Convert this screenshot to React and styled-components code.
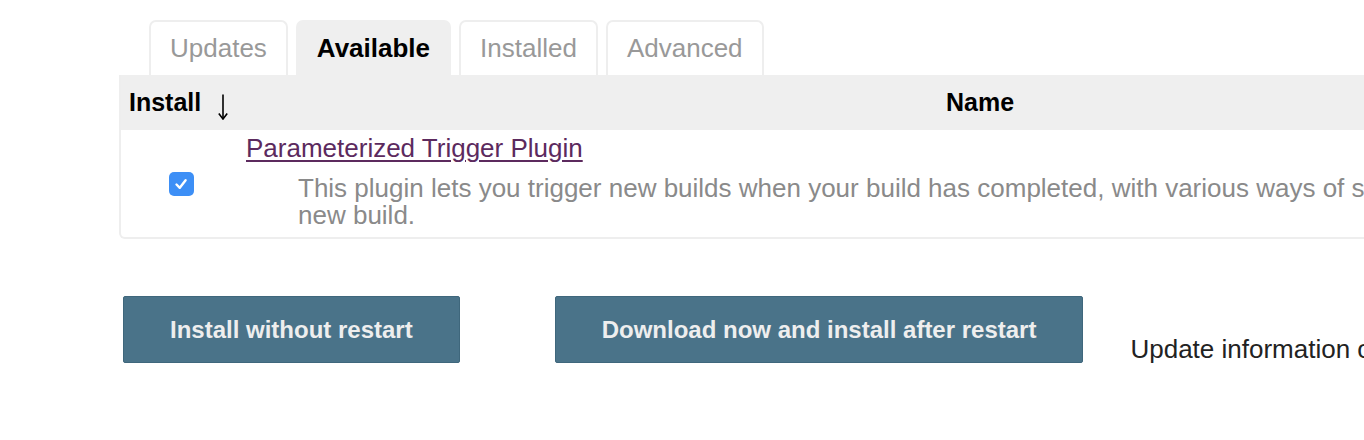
import React from "react";
import styled, { createGlobalStyle } from "styled-components";

const Global = createGlobalStyle`
  html, body { margin: 0; padding: 0; background: #fff; overflow: hidden; }
  body { font-family: "Liberation Sans", Arial, Helvetica, sans-serif; color: #333; }
`;

const Page = styled.div`
  width: 2200px;
  padding: 20px 0 0 119px;
  box-sizing: border-box;
`;

const Tabs = styled.div`
  display: flex;
  gap: 8px;
  padding-left: 30px;
`;

const Tab = styled.div`
  height: 55px;
  box-sizing: border-box;
  padding: 0 19px;
  display: flex;
  align-items: center;
  font-size: 26px;
  border: 2px solid ${(p) => (p.$active ? "#efefef" : "#eeeeee")};
  border-bottom: none;
  border-radius: 7px 7px 0 0;
  background: ${(p) => (p.$active ? "#efefef" : "#fff")};
  color: ${(p) => (p.$active ? "#000" : "#999")};
  font-weight: ${(p) => (p.$active ? 700 : 400)};
`;

const Table = styled.div`
  width: 1900px;
  border: 2px solid #eeeeee;
  border-top: none;
  border-radius: 0 0 6px 6px;
`;

const HeadRow = styled.div`
  display: grid;
  grid-template-columns: 120px 1478px 1fr;
  height: 55px;
  background: #efefef;
  align-items: center;
  font-size: 25px;
  font-weight: 700;
  color: #000;
`;

const HeadCell = styled.div`
  display: flex;
  align-items: center;
  justify-content: ${(p) => (p.$center ? "center" : "flex-start")};
  padding-left: ${(p) => p.$pad || 0}px;
`;

const SortArrow = styled.svg`
  margin-left: 17px;
  margin-top: 8px;
  flex: none;
`;

const BodyRow = styled.div`
  display: grid;
  grid-template-columns: 120px 1478px 1fr;
  align-items: center;
  padding: 4px 0 8px;
`;

const CheckCell = styled.div`
  display: flex;
  justify-content: center;
`;

const Check = styled.span`
  width: 25px;
  height: 24px;
  margin-top: 4px;
  border-radius: 5px;
  background: #3d8ff6;
  display: flex;
  align-items: center;
  justify-content: center;
`;

const NameCell = styled.div`
  padding-left: 5px;
`;

const PluginLink = styled.a`
  font-size: 26px;
  line-height: 28px;
  color: #5c2a5e;
  text-decoration: underline;
  text-underline-offset: 3px;
  text-decoration-thickness: 2px;
`;

const Desc = styled.div`
  margin-top: 13px;
  padding-left: 52px;
  padding-right: 6px;
  font-size: 26px;
  line-height: 27px;
  color: #8a8a8a;
`;

const Actions = styled.div`
  display: flex;
  align-items: flex-start;
  margin-top: 57px;
  padding-left: 4px;
`;

const Button = styled.button`
  height: 67px;
  padding: 0 ${(p) => p.$pad}px;
  border: 1px solid #3f677c;
  border-radius: 2px;
  background: #4a7389;
  color: #eeeeee;
  font-family: "Liberation Sans", Arial, sans-serif;
  font-weight: 700;
  font-size: 24px;
  margin-right: ${(p) => p.$mr}px;
`;

const Info = styled.div`
  font-size: 26px;
  color: #222;
  margin-top: 38px;
  white-space: nowrap;
`;

export default function App() {
  return (
    <>
      <Global />
      <Page>
        <Tabs>
          <Tab>Updates</Tab>
          <Tab $active>Available</Tab>
          <Tab>Installed</Tab>
          <Tab>Advanced</Tab>
        </Tabs>
        <Table>
          <HeadRow>
            <HeadCell $pad={8}>
              Install
              <SortArrow width="10" height="26" viewBox="0 0 10 26" aria-label="sorted descending">
                <path d="M5 0.5 V24.5" stroke="#000" strokeWidth="1.6" fill="none" />
                <path d="M0.8 19.5 L5 25 L9.2 19.5" stroke="#000" strokeWidth="1.6" fill="none" strokeLinejoin="miter" />
              </SortArrow>
            </HeadCell>
            <HeadCell $center>Name</HeadCell>
            <HeadCell $center>Version</HeadCell>
          </HeadRow>
          <BodyRow>
            <CheckCell>
              <Check>
                <svg width="16" height="16" viewBox="0 0 16 16">
                  <path
                    d="M3.5 8.5 L6.8 11.8 L12.6 4.2"
                    fill="none"
                    stroke="#fff"
                    strokeWidth="2.4"
                    strokeLinecap="round"
                    strokeLinejoin="round"
                  />
                </svg>
              </Check>
            </CheckCell>
            <NameCell>
              <PluginLink href="#">Parameterized Trigger Plugin</PluginLink>
              <Desc>
                This plugin lets you trigger new builds when your build has
                completed, with various ways of specifying parameters for the
                new build.
              </Desc>
            </NameCell>
            <div>2.35.2</div>
          </BodyRow>
        </Table>
        <Actions>
          <Button $pad={46} $mr={95}>Install without restart</Button>
          <Button $pad={46} $mr={47}>Download now and install after restart</Button>
          <Info>Update information obtained: 1 day 5 hr ago</Info>
        </Actions>
      </Page>
    </>
  );
}
